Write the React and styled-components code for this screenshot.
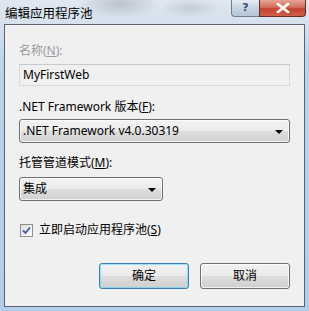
import React from 'react'
import styled, { createGlobalStyle } from 'styled-components'

const GlobalStyle = createGlobalStyle`
    html, body {
        margin: 0;
        padding: 0;
        background: #ffffff;
    }
    body {
        font-family: "Noto Sans", "Noto Sans CJK SC", sans-serif;
        font-size: 12px;
        color: #000;
    }
`

function Combo({ value, width, gap }) {
    return (
        <ComboBox width={width} gap={gap}>
            <span>{value}</span>
            <Arrow />
        </ComboBox>
    )
}

function App() {
    return (
        <Window>
            <GlobalStyle />
            <TitleBar>
                <Title>编辑应用程序池</Title>
                <Caption>
                    <HelpButton>?</HelpButton>
                    <CloseButton>
                        <svg width="14" height="10" viewBox="0 0 14 10">
                            <path d="M2 1 L12 9 M12 1 L2 9" stroke="#fff" strokeWidth="2.6" strokeLinecap="square" />
                        </svg>
                    </CloseButton>
                </Caption>
            </TitleBar>
            <Client>
                <Label disabled>名称(<u>N</u>):</Label>
                <TextBox>MyFirstWeb</TextBox>
                <Label gap={13}>.NET Framework 版本(<u>F</u>):</Label>
                <Combo value=".NET Framework v4.0.30319" gap={4} />
                <Label gap={12}>托管管道模式(<u>M</u>):</Label>
                <Combo value="集成" width={144} gap={6} />
                <CheckRow>
                    <CheckBox>
                        <svg width="9" height="9" viewBox="0 0 9 9">
                            <path d="M1 4.5 L3.5 7 L8 1.5" stroke="#3d5a9e" strokeWidth="1.8" fill="none" />
                        </svg>
                    </CheckBox>
                    <span>立即启动应用程序池(<u>S</u>)</span>
                </CheckRow>
                <ButtonRow>
                    <Button primary>确定</Button>
                    <Button>取消</Button>
                </ButtonRow>
            </Client>
        </Window>
    )
}

export default App

const Window = styled.div`
    width: 309px;
    height: 311px;
    box-sizing: border-box;
    display: flex;
    flex-direction: column;
    padding: 0 4px 4px 4px;
    background:
        radial-gradient(ellipse 40px 14px at 120px 4px, rgba(120,130,145,0.35), transparent),
        radial-gradient(ellipse 30px 10px at 190px 8px, rgba(120,130,145,0.25), transparent),
        linear-gradient(to bottom, #dfe7f0 0px, #d6e1ed 24px, #bcd3ea 60px, #b3cde9 100%);
`

const TitleBar = styled.div`
    height: 24px;
    display: flex;
    justify-content: space-between;
    align-items: flex-start;
`

const Title = styled.div`
    font-family: "Noto Sans CJK SC", sans-serif;
    font-size: 12.5px;
    line-height: 26px;
    padding-left: 1px;
    color: #000;
`

const Caption = styled.div`
    display: flex;
    margin-right: -1px;
`

const HelpButton = styled.div`
    width: 28px;
    height: 17px;
    box-sizing: border-box;
    border: 1px solid #6f7d8e;
    border-top: none;
    border-right: none;
    border-radius: 0 0 0 4px;
    background: linear-gradient(to bottom, #e6edf5, #c6d3e2 50%, #b5c5d8);
    color: #3b4b60;
    font-family: "DejaVu Sans", sans-serif;
    font-weight: bold;
    font-size: 11px;
    text-align: center;
    line-height: 15px;
`

const CloseButton = styled.div`
    width: 47px;
    height: 17px;
    box-sizing: border-box;
    border: 1px solid #6e2b24;
    border-top: none;
    border-radius: 0 0 4px 0;
    background: linear-gradient(to bottom, #e5a495, #d1705e 45%, #c2412f 55%, #d0604a);
    display: flex;
    align-items: center;
    justify-content: center;
`

const Client = styled.div`
    flex: 1;
    border: 1px solid #5a6470;
    background: #f0f0f0;
    padding: 18px 14px 0 14px;
    display: flex;
    flex-direction: column;
`

const Label = styled.div`
    line-height: 16px;
    margin-top: ${props => props.gap || 0}px;
    color: ${props => props.disabled ? '#9a9a9a' : '#000'};
    u {
        text-underline-offset: 1px;
    }
`

const TextBox = styled.div`
    margin-top: 5px;
    height: 22px;
    box-sizing: border-box;
    border: 1px solid #d6d8dc;
    border-top-color: #c5c8cd;
    background: #f0f0f0;
    padding-left: 3px;
    line-height: 20px;
`

const ComboBox = styled.div`
    margin-top: ${props => props.gap}px;
    width: ${props => props.width ? props.width + 'px' : 'auto'};
    height: 24px;
    box-sizing: border-box;
    border: 1px solid #707070;
    border-radius: 3px;
    background: linear-gradient(to bottom, #f3f3f3 0%, #ebebeb 48%, #dddddd 52%, #d2d2d2 100%);
    box-shadow: inset 0 0 0 1px rgba(255,255,255,0.7);
    display: flex;
    align-items: center;
    justify-content: space-between;
    padding: 0 6px 0 3px;
    line-height: 22px;
`

const Arrow = styled.div`
    width: 0;
    height: 0;
    border-left: 4px solid transparent;
    border-right: 4px solid transparent;
    border-top: 4px solid #000;
    margin-top: 1px;
`

const CheckRow = styled.div`
    margin-top: 21px;
    display: flex;
    align-items: center;
    gap: 6px;
    padding-left: 1px;
    line-height: 16px;
`

const CheckBox = styled.div`
    width: 13px;
    height: 13px;
    box-sizing: border-box;
    border: 1px solid #8e8f8f;
    background: linear-gradient(135deg, #dcdcdc, #ffffff);
    display: flex;
    align-items: center;
    justify-content: center;
`

const ButtonRow = styled.div`
    margin-top: 25px;
    display: flex;
    justify-content: flex-end;
    gap: 11px;
`

const Button = styled.div`
    width: 90px;
    height: 26px;
    box-sizing: border-box;
    border: 1px solid ${props => props.primary ? '#3c7fb1' : '#707070'};
    border-radius: 3px;
    background: linear-gradient(to bottom, #f2f2f2 0%, #ebebeb 48%, #dddddd 52%, #cfcfcf 100%);
    box-shadow: inset 0 0 0 1px ${props => props.primary ? 'rgba(72,216,251,0.55)' : 'rgba(255,255,255,0.7)'};
    text-align: center;
    line-height: 24px;
`
